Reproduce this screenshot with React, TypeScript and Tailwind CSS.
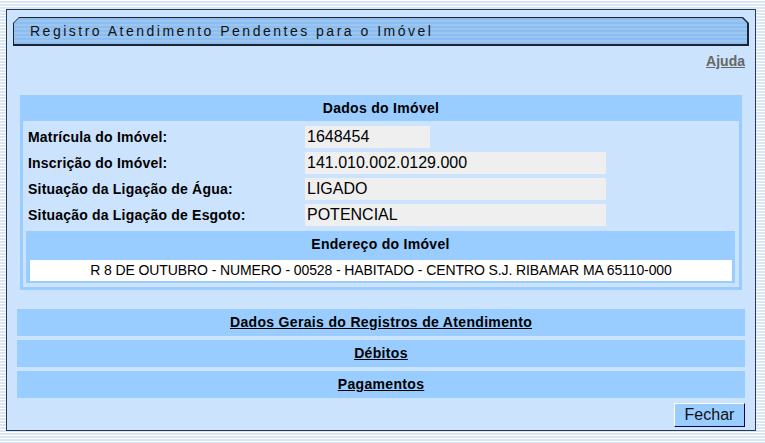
import React from "react";

const font = { fontFamily: '"Liberation Sans", Arial, sans-serif' };

function Row({ label, value, w }: { label: string; value: string; w: string }) {
  return (
    <div className="flex h-[26px] items-start">
      <div className="w-[277px] h-[22px] flex items-center text-[14px] tracking-[0.2px] font-bold text-black">{label}</div>
      <div className={`${w} h-[22px] bg-[#efefef] flex items-center pl-[2px] text-[16px] text-black`}>{value}</div>
    </div>
  );
}

function Bar({ text }: { text: string }) {
  return (
    <div className="h-[27px] bg-[#99ccff] flex items-center justify-center">
      <span className="text-[14px] tracking-[0.33px] font-bold underline text-black">{text}</span>
    </div>
  );
}

export default function App() {
  return (
    <div
      style={font}
      className="w-full min-h-[443px] pt-[9px] pb-[12px] bg-[repeating-linear-gradient(180deg,#ffffff_0px,#ffffff_1px,#d9e7f5_1px,#d9e7f5_3px)]"
    >
      <div className="ml-[6px] w-[750px] border border-[#2c3a4e] bg-[#cbe3fd] pb-[3px]">
        {/* title tab */}
        <div className="mx-[6px] mt-[7px] h-[29px] bg-[#1c2433] [clip-path:polygon(6px_0,calc(100%-6px)_0,100%_6px,100%_100%,0_100%,0_6px)] pt-[1px] pl-[1px] pr-[2px] pb-[2px]">
          <div className="h-full flex items-center pl-[16px] pt-[1px] bg-[repeating-linear-gradient(180deg,#8dbcee_0px,#8dbcee_2px,#9bc6f2_2px,#9bc6f2_4px)] [clip-path:polygon(5px_0,calc(100%-5px)_0,100%_5px,100%_100%,0_100%,0_5px)]">
            <span className="text-[14px] tracking-[2.5px] text-[#111]">Registro Atendimento Pendentes para o Imóvel</span>
          </div>
        </div>

        <div className="h-[16px] mt-[7px] flex justify-end pr-[10px]">
          <span className="text-[14px] leading-[16px] font-bold underline text-[#666666]">Ajuda</span>
        </div>

        {/* Dados do Imovel */}
        <div className="mt-[26px] mx-[13px] bg-[#99ccff] pb-[3px]">
          <div className="h-[26px] flex items-center justify-center text-[14px] tracking-[0.3px] font-bold text-black">Dados do Imóvel</div>
          <div className="mx-[3px] bg-[#cbe3fd] pt-[5px] pb-[4px]">
            <div className="pl-[5px]">
              <Row label="Matrícula do Imóvel:" value="1648454" w="w-[125px]" />
              <Row label="Inscrição do Imóvel:" value="141.010.002.0129.000" w="w-[301px]" />
              <Row label="Situação da Ligação de Água:" value="LIGADO" w="w-[301px]" />
              <Row label="Situação da Ligação de Esgoto:" value="POTENCIAL" w="w-[301px]" />
            </div>
            <div className="mt-[1px] ml-[3px] mr-[4px] bg-[#99ccff] pb-[2px]">
              <div className="h-[26px] flex items-center justify-center text-[14px] tracking-[0.3px] font-bold text-black">Endereço do Imóvel</div>
              <div className="mt-[3px] ml-[4px] mr-[3px] h-[21px] bg-white flex items-center justify-center text-[14px] tracking-[-0.1px] text-black">
                R 8 DE OUTUBRO - NUMERO - 00528 - HABITADO - CENTRO S.J. RIBAMAR MA 65110-000
              </div>
            </div>
          </div>
        </div>

        <div className="mt-[19px] mx-[10px] flex flex-col gap-[4px]">
          <Bar text="Dados Gerais do Registros de Atendimento" />
          <Bar text="Débitos" />
          <Bar text="Pagamentos" />
        </div>

        <div className="mt-[5px] mr-[10px] flex justify-end">
          <button className="w-[71px] h-[24px] bg-[#99ccff] border border-t-white border-l-white border-r-[#000066] border-b-[#000066] text-[16px] text-[#111] flex items-center justify-center">
            Fechar
          </button>
        </div>
      </div>
    </div>
  );
}
